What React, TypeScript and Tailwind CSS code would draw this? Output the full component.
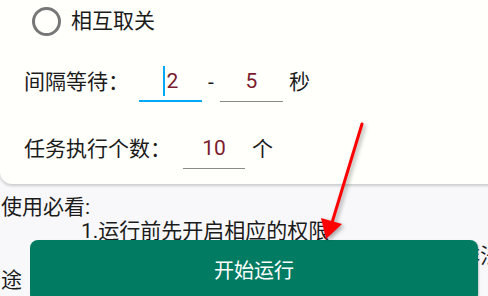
import React from "react";

const font = { fontFamily: "Roboto, 'Noto Sans CJK SC', sans-serif" };

export default function App() {
  return (
    <div
      className="relative w-[488px] h-[296px] overflow-hidden bg-[#f8f8fa] text-[#1b1b1b]"
      style={font}
    >
      {/* card */}
      <div className="w-[520px] h-[184px] bg-[#fffffb] rounded-bl-[12px] shadow-[0_2px_3px_rgba(0,0,0,0.18)] flex flex-col">
        <div className="h-[42px] flex items-center pl-[32px]">
          <div className="w-[29px] h-[29px] rounded-full border-[3px] border-[#777777]" />
          <span className="ml-[10px] text-[21px] leading-none">相互取关</span>
        </div>
        <div className="h-[80px] flex items-center pl-[24px] text-[21px] leading-none">
          <span className="w-[105px]">间隔等待：</span>
          <div className="ml-[10px] w-[63px] h-[40px] border-b-2 border-[#03a9f4] flex items-center justify-center">
            <span className="w-[2px] h-[30px] bg-[#03a9f4]" />
            <span className="ml-[2px] text-[#7b1c2e]">2</span>
          </div>
          <span className="ml-[6px] w-[12px]">-</span>
          <div className="w-[63px] h-[40px] border-b-[1.5px] border-[#8a8a8a] flex items-center justify-center text-[#7b1c2e]">
            5
          </div>
          <span className="ml-[6px]">秒</span>
        </div>
        <div className="h-[54px] flex items-center pl-[24px] text-[21px] leading-none">
          <span className="w-[147px]">任务执行个数：</span>
          <div className="ml-[12px] w-[62px] h-[40px] border-b-[1.5px] border-[#8a8a8a] flex items-center justify-center text-[#7b1c2e]">
            10
          </div>
          <span className="ml-[7px]">个</span>
        </div>
      </div>

      {/* notes */}
      <div className="mt-[11px] text-[21px] leading-[24.4px] whitespace-nowrap">
        <div className="pl-[1px]">使用必看:</div>
        <div className="pl-[81px]">1.运行前先开启相应的权限</div>
        <div className="w-[522px] text-right">2.本软件仅供学习交流使用请勿用于非法用</div>
        <div className="pl-[1px]">途</div>
      </div>

      {/* button */}
      <button className="absolute left-[30px] top-[240px] w-[448px] h-[62px] rounded-[8px] bg-[#017c63] text-white text-[20px] leading-none flex items-center justify-center shadow-[1px_1px_2px_rgba(0,0,0,0.2)]">
        开始运行
      </button>

      {/* red arrow */}
      <svg
        className="absolute left-0 top-0 pointer-events-none"
        width="488"
        height="296"
        viewBox="0 0 488 296"
        style={{ filter: "drop-shadow(2px 2px 2px rgba(0,0,0,0.35))" }}
      >
        <line x1="362" y1="124" x2="331" y2="226" stroke="#ff0000" strokeWidth="3" strokeLinecap="round" />
        <polygon points="326,239 321,218 342,224" fill="#ff0000" />
      </svg>
    </div>
  );
}
